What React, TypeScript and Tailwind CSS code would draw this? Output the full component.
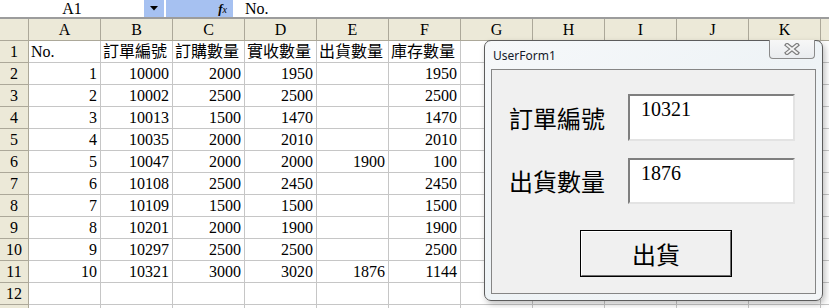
import React from 'react';

const serif = { fontFamily: '"Liberation Serif", "Noto Sans CJK TC", serif' };

const cols = ['A', 'B', 'C', 'D', 'E', 'F', 'G', 'H', 'I', 'J', 'K'];

const header = ['No.', '訂單編號', '訂購數量', '實收數量', '出貨數量', '庫存數量'];

const rows: (number | '')[][] = [
    [1, 10000, 2000, 1950, '', 1950],
    [2, 10002, 2500, 2500, '', 2500],
    [3, 10013, 1500, 1470, '', 1470],
    [4, 10035, 2000, 2010, '', 2010],
    [5, 10047, 2000, 2000, 1900, 100],
    [6, 10108, 2500, 2450, '', 2450],
    [7, 10109, 1500, 1500, '', 1500],
    [8, 10201, 2000, 1900, '', 1900],
    [9, 10297, 2500, 2500, '', 2500],
    [10, 10321, 3000, 3020, 1876, 1144],
];

const RowHead: React.FC<{ n?: number }> = ({ n }) => (
    <div className="w-[29px] h-full flex-shrink-0 bg-[#ece9d8] border-r border-b border-[#aca899] text-center leading-[21px]">
        {n}
    </div>
);

const Cell: React.FC<{ v?: string | number; left?: boolean }> = ({ v, left }) => (
    <div
        className={`w-[72px] h-full flex-shrink-0 border-r border-b border-[#c6c6c6] leading-[21px] whitespace-nowrap ${
            left ? 'text-left pl-[2px]' : 'text-right pr-[3px]'
        }`}
    >
        {v}
    </div>
);

const Filler = () => <div className="flex-1 h-full border-b border-[#c6c6c6]" />;

const TextBox: React.FC<{ value: string; h: string }> = ({ value, h }) => (
    <div
        className={`w-[167px] ${h} bg-white border-2 border-t-[#7f7f7f] border-l-[#7f7f7f] border-b-[#e3e3e3] border-r-[#e3e3e3] pl-[11px] pt-[3px] text-[20px] leading-[20px] text-black`}
        style={serif}
    >
        {value}
    </div>
);

const CloseIcon = () => (
    <svg width="16" height="12" viewBox="0 0 16 12">
        <path d="M3 2 L13 10 M13 2 L3 10" stroke="#7d7d7d" strokeWidth="4.2" strokeLinecap="square" />
        <path d="M3 2 L13 10 M13 2 L3 10" stroke="#f4f4f4" strokeWidth="1.8" strokeLinecap="square" />
    </svg>
);

const UserForm = () => (
    <div className="absolute left-[484px] top-[40px] w-[339px] h-[261px] rounded-[7px] border border-[#5c5c5c] bg-gradient-to-br from-[#f6f8fa] via-[#eef3f6] to-[#f3f5f7] shadow-[2px_3px_6px_rgba(0,0,0,0.25)] flex flex-col">
        <div className="relative h-[28px] flex-shrink-0">
            <span
                className="absolute left-[8px] top-[6px] text-[12px] text-[#141a2a]"
                style={{ fontFamily: '"Noto Sans", "Open Sans", sans-serif' }}
            >
                UserForm1
            </span>
            <div className="absolute right-[7px] top-[-1px] w-[46px] h-[19px] border border-t-0 border-[#8b8b8b] rounded-b-[4px] bg-gradient-to-b from-[#f7f7f7] to-[#e9ecef] flex items-center justify-center">
                <CloseIcon />
            </div>
        </div>
        <div className="mx-[6px] h-[225px] border border-[#858585] bg-[#f0f0f0] flex flex-col pt-[24px]" style={serif}>
            <div className="flex items-center">
                <div className="w-[136px] pl-[17px] text-[24px] leading-none text-black" style={{ fontFamily: '"Noto Sans CJK TC", serif' }}>
                    訂單編號
                </div>
                <TextBox value="10321" h="h-[47px]" />
            </div>
            <div className="flex items-center mt-[17px]">
                <div className="w-[136px] pl-[17px] text-[24px] leading-none text-black" style={{ fontFamily: '"Noto Sans CJK TC", serif' }}>
                    出貨數量
                </div>
                <TextBox value="1876" h="h-[46px]" />
            </div>
            <div className="mt-[26px] ml-[88px] w-[152px] h-[47px] border border-black">
                <div
                    className="w-full h-full border border-t-white border-l-white border-b-[#6d6d6d] border-r-[#6d6d6d] bg-[#f0f0f0] flex items-center justify-center text-[24px] text-black"
                    style={{ fontFamily: '"Noto Sans CJK TC", serif' }}
                >
                    出貨
                </div>
            </div>
        </div>
    </div>
);

export default function App() {
    return (
        <div className="relative w-[829px] h-[308px] overflow-hidden bg-white text-[16px] text-black" style={serif}>
            {/* formula bar */}
            <div className="flex h-[17px] leading-[17px]">
                <div className="w-[144px] text-center">A1</div>
                <div className="w-[20px] bg-[#a6c1f1] flex items-center justify-center">
                    <svg width="8" height="5" viewBox="0 0 8 5">
                        <path d="M0 0 H8 L4 4.5 Z" fill="#000" />
                    </svg>
                </div>
                <div className="w-[2px]" />
                <div className="w-[67px] bg-[#a6c1f1] flex justify-end pr-[6px] italic text-[13px]">
                    <span className="font-bold">f</span>
                    <span className="text-[10px] leading-[19px]">x</span>
                </div>
                <div className="flex-1 pl-[12px]">No.</div>
            </div>
            <div className="h-[2px] bg-[#9c9c9c]" />

            {/* column headers */}
            <div className="flex h-[22px] bg-[#ece9d8]">
                <div className="w-[29px] h-full flex-shrink-0 border-r border-b border-[#aca899]" />
                {cols.map(c => (
                    <div key={c} className="w-[72px] h-full flex-shrink-0 border-r border-b border-[#aca899] text-center leading-[21px]">
                        {c}
                    </div>
                ))}
                <div className="flex-1 h-full border-b border-[#aca899]" />
            </div>

            {/* row 1 */}
            <div className="flex h-[22px]">
                <RowHead n={1} />
                {header.map(h => (
                    <Cell key={h} v={h} left />
                ))}
                {cols.slice(6).map(c => (
                    <Cell key={c} />
                ))}
                <Filler />
            </div>

            {rows.map((r, i) => (
                <div key={i} className="flex h-[22px]">
                    <RowHead n={i + 2} />
                    {r.map((v, j) => (
                        <Cell key={j} v={v} />
                    ))}
                    {cols.slice(6).map(c => (
                        <Cell key={c} />
                    ))}
                    <Filler />
                </div>
            ))}

            {/* row 12, then the sliver of row 13 at the bottom edge */}
            {[12, 0].map(n => (
                <div key={n} className="flex h-[22px]">
                    <RowHead n={n || undefined} />
                    {cols.map(c => (
                        <Cell key={c} />
                    ))}
                    <Filler />
                </div>
            ))}

            <UserForm />
        </div>
    );
}
